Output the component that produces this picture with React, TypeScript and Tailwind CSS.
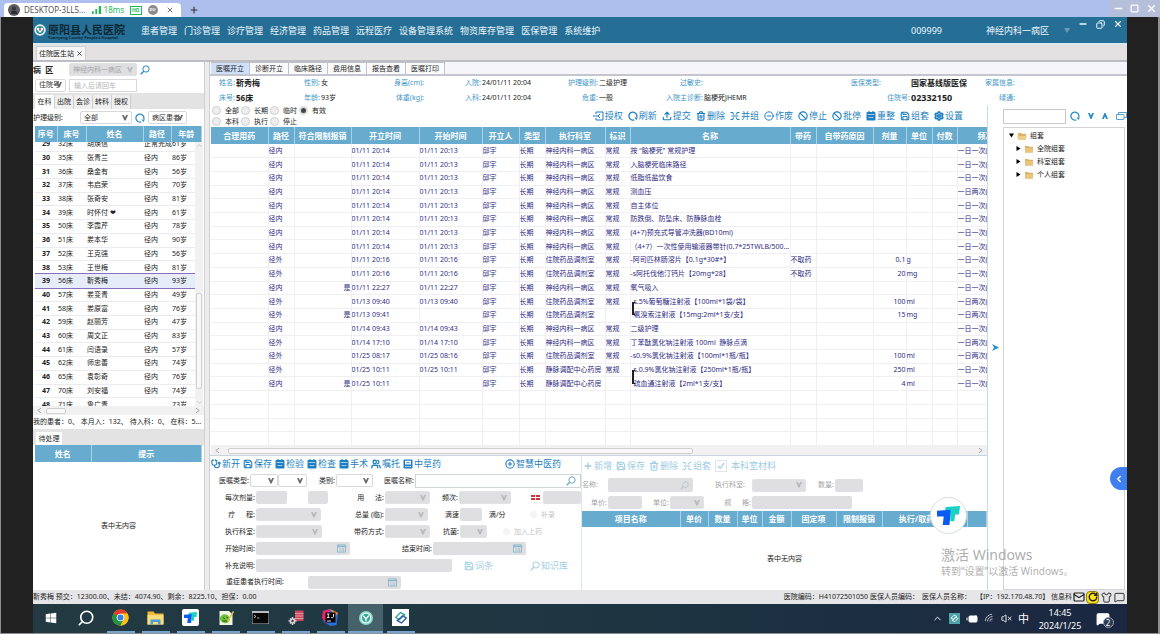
import React from "react";
import { FaWindows } from "react-icons/fa";
import {
  Ban,
  BatteryMedium,
  ChevronLeft,
  ChevronUp,
  CirclePlus,
  CircleMinus,
  Copy,
  Mail,
  MessageSquare,
  Minus,
  Plus,
  RotateCw,
  Save,
  Search,
  Settings,
  Shirt,
  Square,
  Stethoscope,
  Trash2,
  Upload,
  Users,
  VolumeX,
  Wifi,
  X,
} from "lucide-react";

/* ---------- small drawings ---------- */

function RefreshIcon({ className = "" }: { className?: string }) {
  return (
    <svg viewBox="0 0 20 20" className={className} fill="none" aria-hidden="true">
      <path d="M12.5 17.6A8 8 0 1 1 17.4 12.6" stroke="currentColor" strokeWidth="2.6" />
      <path d="M13 13.2h7l-3.4 5z" fill="currentColor" />
    </svg>
  );
}

function GrantIcon({ className = "" }: { className?: string }) {
  return (
    <svg viewBox="0 0 22 20" className={className} fill="none" stroke="currentColor" strokeWidth="2" aria-hidden="true">
      <path d="M6 6V2h14v16H6v-4" />
      <path d="M0 10h12" />
      <path d="M14 6l-4 4 4 4" />
    </svg>
  );
}

function CalendarIcon({ className = "" }: { className?: string }) {
  return (
    <svg viewBox="0 0 20 20" className={className} fill="none" stroke="currentColor" strokeWidth="2" aria-hidden="true">
      <path d="M1 2h18v16H1z" />
      <path d="M1 5.500h18" strokeWidth="3" />
      <path d="M5 11h3m2 0h5M5 15h3m2 0h2m2-4v6" strokeWidth="1.600" />
    </svg>
  );
}

function SheetIcon({ className = "" }: { className?: string }) {
  return (
    <svg viewBox="0 0 20 20" className={className} aria-hidden="true">
      <rect x="1" y="2" width="18" height="17" rx="2" fill="currentColor" />
      <path d="M6 0v4M14 0v4" stroke="currentColor" strokeWidth="2.4" />
      <path d="M3 7h14M5 13h10" stroke="#fff" strokeWidth="1.5" opacity="0.8" />
    </svg>
  );
}

function HerbIcon({ className = "" }: { className?: string }) {
  return (
    <svg viewBox="0 0 20 20" className={className} aria-hidden="true">
      <rect x="1" y="1" width="18" height="18" rx="2" fill="currentColor" />
      <rect x="4" y="3.5" width="12" height="7.5" fill="#fff" />
      <path d="M6.5 7.4h7" stroke="currentColor" strokeWidth="1.8" />
      <path d="M4 15h12" stroke="#fff" strokeWidth="1.8" strokeDasharray="3 1.5" />
    </svg>
  );
}

function MergeIcon({ className = "" }: { className?: string }) {
  return (
    <svg viewBox="0 0 20 20" className={className} fill="none" stroke="currentColor" strokeWidth="2.2" aria-hidden="true">
      <path d="M1 3h4l3 4M19 3h-4l-3 4M1 17h4l3-4M19 17h-4l-3-4M3 10h14" />
    </svg>
  );
}

function Magnifier({ className = "" }: { className?: string }) {
  return (
    <svg viewBox="0 0 20 20" className={className} fill="none" stroke="currentColor" aria-hidden="true">
      <circle cx="12" cy="8" r="6.3" strokeWidth="2" />
      <path d="M7.4 12.6 1.5 18.5" strokeWidth="2.6" />
    </svg>
  );
}

function FolderIcon({ open = false }: { open?: boolean }) {
  return (
    <svg viewBox="0 0 22 18" className="h-2 w-2.5 shrink-0" aria-hidden="true">
      <path d="M2 2h7l2 2h9v13H2z" fill="#d9b46a" />
      {open ? <path d="M0 9h22l-3 9H3z" fill="#efcf8c" /> : <path d="M2 7h18v10H2z" fill="#e8c47c" />}
    </svg>
  );
}

function ToDeskMark({ className = "" }: { className?: string }) {
  return (
    <svg viewBox="0 0 24 22" className={className} aria-hidden="true">
      <path d="M9 2 24 1l-1 9h-4l-1 7h-4V9H8z" fill="#18d3c5" />
      <path d="M0 6 14 5v6l-1 10H6l1-9H0z" fill="#0b5bf2" />
    </svg>
  );
}

/* ---------- form pieces ---------- */

function Pick({
  label,
  value = "",
  width,
  off = false,
}: {
  label: string;
  value?: string;
  width: string;
  off?: boolean;
}) {
  return (
    <span className={`grid shrink-0 items-center ${width}`}>
      <select
        aria-label={label}
        disabled={off}
        className={`col-start-1 row-start-1 h-[13px] w-full appearance-none rounded-xs border pl-[3px] ${
          off ? "border-[#e2e2e4] bg-[#dfdfe1] text-[#a5a5a5] opacity-100" : "border-[#d9d9d9] bg-white text-[#333]"
        }`}
      >
        <option>{value}</option>
      </select>
      <svg
        viewBox="0 0 10 10"
        className={`pointer-events-none col-start-1 row-start-1 mr-1 size-[6px] justify-self-end ${off ? "text-[#b9b9bb]" : "text-[#6b6b6b]"}`}
        aria-hidden="true"
      >
        <path d="M0 0h3l2 4 2-4h3L6 9H4z" fill="currentColor" />
      </svg>
    </span>
  );
}

function Box({ label, width }: { label: string; width: string }) {
  return <input aria-label={label} disabled className={`h-[13px] shrink-0 rounded-xs bg-[#dfdfe1] ${width}`} />;
}

function DateBox({ label, width }: { label: string; width: string }) {
  return (
    <span className={`flex h-[13px] shrink-0 items-center rounded-xs bg-[#dfdfe1] pr-1 ${width}`}>
      <input aria-label={label} disabled className="min-w-0 flex-1" />
      <CalendarIcon className="size-[9px] text-[#84b5c9]" />
    </span>
  );
}

function Cap({ children, width }: { children: React.ReactNode; width: string }) {
  return <span className={`shrink-0 pr-px text-right whitespace-pre ${width}`}>{children}</span>;
}

function Tool({ icon, text }: { icon: React.ReactNode; text: string }) {
  return (
    <button type="button" className="flex shrink-0 items-center gap-px text-[9px] leading-[12px]">
      {icon}
      {text}
    </button>
  );
}

function Radio({ text, on = false }: { text: string; on?: boolean }) {
  return (
    <label className="flex h-[11px] w-[29px] items-center gap-1">
      <input
        type="radio"
        name="scope"
        defaultChecked={on}
        className="size-[9px] shrink-0 appearance-none rounded-full border border-[#cfcfcf] bg-[#eee] checked:border-2 checked:border-[#ddd] checked:bg-[#444]"
      />
      <span className="whitespace-nowrap">{text}</span>
    </label>
  );
}

function HScroll({ thumb }: { thumb: string }) {
  return (
    <div className="flex h-[9px] shrink-0 items-center gap-1 bg-[#f1f1f1] px-1 text-[#999]">
      <svg viewBox="0 0 6 6" className="size-[5px]" aria-hidden="true">
        <path d="M5 0 1 3l4 3" fill="none" stroke="currentColor" />
      </svg>
      <div className="flex-1">
        <div className={`h-[6px] rounded-xs border border-[#cfcfcf] bg-[#f8f8f8] ${thumb}`} />
      </div>
      <svg viewBox="0 0 6 6" className="size-[5px]" aria-hidden="true">
        <path d="M1 0l4 3-4 3" fill="none" stroke="currentColor" />
      </svg>
    </div>
  );
}

/* ---------- data ---------- */

const menus = [
  "患者管理",
  "门诊管理",
  "诊疗管理",
  "经济管理",
  "药品管理",
  "远程医疗",
  "设备管理系统",
  "物资库存管理",
  "医保管理",
  "系统维护",
];

const patients: [string, string, string, string, string][] = [
  ["29", "32床", "胡焕信", "正常完成", "61岁"],
  ["30", "35床", "张青兰", "径内", "86岁"],
  ["31", "36床", "桑金有", "径内", "56岁"],
  ["32", "37床", "韦启荣", "径内", "70岁"],
  ["33", "38床", "张奇安", "径内", "81岁"],
  ["34", "39床", "时怀付 ❤", "径内", "61岁"],
  ["35", "50床", "李霞芹", "径内", "78岁"],
  ["36", "51床", "娄本华", "径内", "90岁"],
  ["37", "52床", "王克强", "径内", "56岁"],
  ["38", "53床", "王世梅", "径内", "81岁"],
  ["39", "56床", "靳秀梅", "径内", "93岁"],
  ["40", "57床", "娄变青", "径内", "49岁"],
  ["41", "58床", "娄原富", "径内", "76岁"],
  ["42", "59床", "赵丽芳", "径内", "47岁"],
  ["43", "60床", "周文正", "径内", "83岁"],
  ["44", "61床", "闫语录", "径内", "57岁"],
  ["45", "62床", "师忠善", "径内", "74岁"],
  ["46", "65床", "袁彰奇", "径内", "76岁"],
  ["47", "70床", "刘安福", "径内", "74岁"],
  ["48", "71床", "鲁广青", "", "73岁"],
];

type Order = {
  path: string;
  limit?: string;
  made: string;
  start?: string;
  room: string;
  mark?: string;
  name: string;
  take?: string;
  dose?: string;
  unit?: string;
  freq: string;
  group?: "top" | "bottom";
};

const ward = "神经内科一病区";
const disp = "住院药品调剂室";
const iv = "静脉调配中心药房";
const once = "一日一次(";
const twice = "一日两次(";
const d14 = { path: "径内", made: "01/11 20:14", start: "01/11 20:13", room: ward, mark: "常规" };

const orders: Order[] = [
  { ...d14, name: "按 “脑梗死” 常规护理", freq: once },
  { ...d14, name: "入脑梗死临床路径", freq: once },
  { ...d14, name: "低脂低盐饮食", freq: once },
  { ...d14, name: "测血压", freq: twice },
  { ...d14, name: "自主体位", freq: once },
  { ...d14, name: "防跌倒、防坠床、防静脉血栓", freq: once },
  { ...d14, name: "(4+7)预充式导管冲洗器(BD10ml)", freq: once },
  { ...d14, name: "（4+7）一次性使用输液器带针(0.7*25TWLB/500...", freq: once },
  { path: "径外", made: "01/11 20:16", start: "01/11 20:16", room: disp, mark: "常规", name: "-阿司匹林肠溶片【0.1g*30#*】", take: "不取药", dose: "0.1", unit: "g", freq: once },
  { path: "径外", made: "01/11 20:16", start: "01/11 20:16", room: disp, mark: "常规", name: "-s阿托伐他汀钙片【20mg*28】", take: "不取药", dose: "20", unit: "mg", freq: once },
  { path: "径内", limit: "是", made: "01/11 22:27", start: "01/11 22:27", room: ward, mark: "常规", name: "氧气吸入", freq: once },
  { path: "径外", made: "01/13 09:40", start: "01/13 09:40", room: disp, mark: "常规", name: "s.5%葡萄糖注射液【100ml*1袋/袋】", dose: "100", unit: "ml", freq: twice, group: "top" },
  { path: "径外", limit: "是", made: "01/13 09:41", room: disp, name: "氨溴索注射液【15mg:2ml*1支/支】", dose: "15", unit: "mg", freq: twice, group: "bottom" },
  { path: "径内", made: "01/14 09:43", start: "01/14 09:43", room: ward, mark: "常规", name: "二级护理", freq: once },
  { path: "径外", made: "01/14 17:10", start: "01/14 17:10", room: ward, mark: "常规", name: "丁苯酞氯化钠注射液 100ml  静脉点滴", freq: twice },
  { path: "径外", made: "01/25 08:17", start: "01/25 08:16", room: disp, mark: "常规", name: "-s0.9%氯化钠注射液【100ml*1瓶/瓶】", dose: "100", unit: "ml", freq: twice },
  { path: "径外", made: "01/25 10:11", start: "01/25 10:11", room: iv, mark: "常规", name: "s.0.9%氯化钠注射液【250ml*1瓶/瓶】", dose: "250", unit: "ml", freq: once, group: "top" },
  { path: "径内", limit: "是", made: "01/25 10:11", room: iv, name: "疏血通注射液【2ml*1支/支】", dose: "4", unit: "ml", freq: once, group: "bottom" },
];

const orderCols: [string, string][] = [
  ["合理用药", "w-[57px]"],
  ["路径", "w-[26px]"],
  ["符合限制报销", "w-[57px]"],
  ["开立时间", "w-[68px]"],
  ["开始时间", "w-[63px]"],
  ["开立人", "w-[37px]"],
  ["类型", "w-[26px]"],
  ["执行科室", "w-[60px]"],
  ["标识", "w-[25px]"],
  ["名称", "w-[160px]"],
  ["带药", "w-[26px]"],
  ["自带药原因", "w-[57px]"],
  ["剂量", "w-[33px]"],
  ["单位", "w-[26px]"],
  ["付数", "w-[25px]"],
];

const headCell = "overflow-hidden border-r border-[#a8d3e6] p-0 text-center text-[8px] font-bold whitespace-nowrap text-white";
const cellLine = "border-r border-b border-[#f0f0f3] p-0 whitespace-pre";
const bodyCell = "overflow-hidden border-r border-b border-[#f0f0f3] p-0 whitespace-pre";

/* ---------- sections ---------- */

function BrowserBar() {
  return (
    <div className="flex h-[17px] shrink-0 items-end bg-[#aebfee] text-[8px] leading-[10px]">
      <div className="ml-1 flex h-[14px] w-[177px] items-center rounded-t-sm bg-white pl-1 text-[#555]">
        <svg viewBox="0 0 24 24" className="size-3" aria-hidden="true">
          <circle cx="12" cy="12" r="12" fill="#5b5b61" />
          <path d="M5 20c1-6 3-7 7-7s6 1 7 7z" fill="#2c2c31" />
          <circle cx="12" cy="9" r="4" fill="#36363b" />
        </svg>
        <span className="ml-1">DESKTOP-3LL5...</span>
        <svg viewBox="0 0 16 14" className="ml-1.5 h-[8px] w-[9px] fill-[#1fb85c]" aria-hidden="true">
          <path d="M0 9h3v5H0zM6 5h3v9H6zM12 0h4v14h-4z" />
        </svg>
        <span className="ml-[3px] text-[#1fb85c]">18ms</span>
        <span className="ml-1.5 border border-[#1fb85c] px-px text-[5px] leading-[7px] font-bold text-[#1fb85c]">HD</span>
        <span className="ml-1.5 flex size-[10px] items-center justify-center rounded-full bg-[#8b8b90] text-[4px] font-bold text-white">
          DU
        </span>
        <button type="button" aria-label="关闭标签" className="ml-2">
          <X className="size-2" strokeWidth={2.6} />
        </button>
      </div>
      <button type="button" aria-label="新建标签" className="mb-0.5 ml-2 text-[#333]">
        <Plus className="size-[10px]" strokeWidth={2.6} />
      </button>
      <div className="ml-auto flex h-full w-[50px] items-center justify-around bg-[#b5bfd9] text-white">
        <button type="button" aria-label="最小化">
          <Minus className="size-[11px]" strokeWidth={3} />
        </button>
        <button type="button" aria-label="最大化">
          <Square className="size-[9px]" strokeWidth={3.4} />
        </button>
        <button type="button" aria-label="关闭">
          <X className="size-[11px]" strokeWidth={3} />
        </button>
      </div>
    </div>
  );
}

function Header() {
  return (
    <header className="flex h-[26px] shrink-0 items-center bg-[#256f97] text-[9px] leading-[12px] text-[#eef7fb]">
      <svg viewBox="0 0 24 24" className="ml-px size-3" aria-hidden="true">
        <circle cx="12" cy="12" r="11.5" fill="#e9f6f6" />
        <circle cx="12" cy="12" r="8" fill="#2f8f93" />
        <path d="M12 18 5.5 11c-1-3 3-5 6.500-1.500C15.500 6 19.500 8 18.500 11z" fill="#fff" />
        <path d="M10 9h4v4h-4z" fill="#c8504a" />
      </svg>
      <div className="ml-0.5 flex w-[78px] flex-col pt-1 text-[#0d2733]">
        <span className="text-[11px] leading-[12px] font-bold whitespace-nowrap">原阳县人民医院</span>
        <span className="text-[4px] leading-[4px] font-bold whitespace-nowrap">Yuanyang County People's Hospital</span>
      </div>
      <nav className="ml-[15px] flex gap-[7px] pt-px whitespace-nowrap">
        {menus.map((m) => (
          <a key={m} href="#menu">
            {m}
          </a>
        ))}
      </nav>
      <span className="mr-[44px] ml-auto pt-px">009999</span>
      <span className="pt-px">神经内科一病区</span>
      <span className="mr-2 ml-[15px] text-[6px] text-[#6f9db6]">▼</span>
      <div className="flex gap-2 self-start pt-0.5 pr-1">
        <button type="button" aria-label="窗口最小化">
          <Minus className="size-[10px]" strokeWidth={3.4} />
        </button>
        <button type="button" aria-label="窗口还原">
          <Copy className="size-[9px] -scale-x-100" strokeWidth={2.6} />
        </button>
        <button type="button" aria-label="窗口关闭">
          <X className="size-[10px]" strokeWidth={2.8} />
        </button>
      </div>
    </header>
  );
}

function PatientPanel() {
  const cols = (
    <colgroup>
      <col className="w-[22px]" />
      <col className="w-[29px]" />
      <col className="w-[57px]" />
      <col className="w-[28px]" />
      <col />
    </colgroup>
  );
  return (
    <aside className="flex w-[171px] shrink-0 flex-col bg-white">
      <div className="flex h-[15px] items-center gap-[3px]">
        <span className="w-[33px] text-[8px] font-bold whitespace-pre">病  区</span>
        <Pick label="病区" value="神经内科一病区" width="w-[68px]" off />
        <button type="button" aria-label="查找病区" className="text-[#2b8bc6]">
          <Magnifier className="size-[10px]" />
        </button>
      </div>
      <div className="flex h-4 items-center gap-[3px] pl-0.5">
        <Pick label="查询方式" value="住院号" width="w-[31px]" />
        <input
          aria-label="住院号"
          placeholder="输入后请回车"
          className="h-[13px] w-[68px] border border-[#d9d9d9] pl-1 placeholder:text-[#b5b5b5]"
        />
      </div>
      <div className="flex h-4 items-end bg-[#e3e3e3] pl-0.5">
        {["在科", "出院", "会诊", "转科", "授权"].map((t, i) => (
          <button
            type="button"
            key={t}
            className={`h-[14px] border-r border-[#cfcfcf] text-[7px] ${i === 0 ? "w-[20px] bg-white" : "w-[19px] bg-[#efefef]"}`}
          >
            {t}
          </button>
        ))}
      </div>
      <div className="flex h-[17px] items-center">
        <span className="w-[47px]">护理级别:</span>
        <Pick label="护理级别" value="全部" width="w-[52px]" />
        <button type="button" aria-label="刷新患者" className="mx-[3px] text-[#2b8bc6]">
          <RefreshIcon className="size-[10px]" />
        </button>
        <Pick label="患者范围" value="病区患者" width="w-[39px]" />
      </div>
      <table className="mx-0.5 h-4 w-[167px] shrink-0 table-fixed border-collapse bg-[#67abce]">
        {cols}
        <thead>
          <tr>
            {["序号", "床号", "姓名", "路径", "年龄"].map((h) => (
              <th key={h} className={headCell}>
                {h}
              </th>
            ))}
          </tr>
        </thead>
      </table>
      <div className="ml-0.5 flex h-[264px] shrink-0 overflow-hidden">
        <div className="flex items-center pt-0.5">
          <table className="h-[274px] w-[160px] table-fixed border-collapse">
            {cols}
            <tbody>
              {patients.map((p) => (
                <tr key={p[0]} className={p[0] === "39" ? "bg-[#e6edf8] outline outline-[#8a6fc0]" : ""}>
                  <td className="border-b border-[#ececf0] p-0 text-center font-bold">{p[0]}</td>
                  {p.slice(1).map((v, i) => (
                    <td key={i} className="border-b border-[#ececf0] p-0 pl-px whitespace-nowrap">
                      {v}
                    </td>
                  ))}
                </tr>
              ))}
            </tbody>
          </table>
        </div>
        <div className="flex w-[8px] flex-col items-center justify-between bg-[#f1f1f1] text-[#aaa]">
          <ChevronUp className="size-[7px]" />
          <div className="mt-[144px] w-[6px] flex-1 rounded-xs border border-[#cfcfcf] bg-[#f8f8f8]" />
          <ChevronUp className="mt-2.5 size-[7px] rotate-180" />
        </div>
      </div>
      <HScroll thumb="w-5" />
      <div className="h-[14px] leading-[14px] whitespace-nowrap">我的患者：0、 本月入：132、 待入科：0、 在科：5...</div>
      <div className="flex h-4 items-end bg-[#e3e3e3] pl-[3px]">
        <button type="button" className="h-[13px] w-[26px] bg-white">
          待处理
        </button>
      </div>
      <table className="mx-0.5 h-[17px] w-[167px] shrink-0 table-fixed border-collapse bg-[#67abce]">
        <thead>
          <tr>
            <th className={`w-[56px] ${headCell}`}>姓名</th>
            <th className={headCell}>提示</th>
          </tr>
        </thead>
      </table>
      <div className="flex flex-1 items-center justify-center">表中无内容</div>
    </aside>
  );
}

function PatientInfo() {
  const key = "pr-px text-right text-[#3d95c8] whitespace-nowrap";
  return (
    <dl className="grid h-[29px] shrink-0 grid-cols-[26px_60px_25px_64px_40px_32px_25px_81px_36px_55px_50px_147px_60px_70px_35px_1fr] items-center leading-[14px] whitespace-nowrap">
      <dt className={key}>姓名:</dt>
      <dd className="text-[8px] font-bold">靳秀梅</dd>
      <dt className={key}>性别:</dt>
      <dd>女</dd>
      <dt className={key}>身高(cm):</dt>
      <dd />
      <dt className={key}>入院:</dt>
      <dd>24/01/11 20:04</dd>
      <dt className={key}>护理级别:</dt>
      <dd>二级护理</dd>
      <dt className={key}>过敏史:</dt>
      <dd />
      <dt className="text-[#3d95c8]">医保类型:</dt>
      <dd className="text-[8px] font-bold">国家基线版医保</dd>
      <dt className={key}>家属信息:</dt>
      <dd />
      <dt className={key}>床号:</dt>
      <dd className="text-[8px] font-bold">56床</dd>
      <dt className={key}>年龄:</dt>
      <dd>93岁</dd>
      <dt className={key}>体重(kg):</dt>
      <dd />
      <dt className={key}>入科:</dt>
      <dd>24/01/11 20:04</dd>
      <dt className={key}>危重:</dt>
      <dd>一般</dd>
      <dt className={key}>入院主诊断:</dt>
      <dd>脑梗死JHEMR</dd>
      <dt className={key}>住院号:</dt>
      <dd className="text-[9px] font-bold">02332150</dd>
      <dt className={key}>绿通:</dt>
      <dd />
    </dl>
  );
}

function OrderTable() {
  const rows = Array.from({ length: 22 }, (_, i) => orders[i]);
  return (
    <div className="flex min-h-0 flex-1 flex-col overflow-hidden">
      <table className="w-full shrink-0 table-fixed border-collapse">
        <thead>
          <tr className="h-[17px] bg-[#67abce]">
            {orderCols.map(([h, w]) => (
              <th key={h} className={`${w} ${headCell}`}>
                {h}
              </th>
            ))}
            <th className="overflow-hidden p-0 pl-5 text-left text-[8px] font-bold whitespace-nowrap text-white">频次</th>
          </tr>
        </thead>
      </table>
      <table className="h-[302px] w-full shrink-0 table-fixed border-collapse">
        <colgroup>
          {orderCols.map(([h, w]) => (
            <col key={h} className={w} />
          ))}
          <col />
        </colgroup>
        <tbody className="text-[#2f2c84]">
          {rows.map((o, i) => (
            <tr key={i} className="h-[13px]">
              <td className={bodyCell} />
              <td className={bodyCell}>{o?.path}</td>
              <td className={`text-right ${bodyCell}`}>{o?.limit}</td>
              <td className={bodyCell}>{o?.made}</td>
              <td className={bodyCell}>{o?.start}</td>
              <td className={bodyCell}>{o ? "邱宇" : ""}</td>
              <td className={bodyCell}>{o ? "长期" : ""}</td>
              <td className={bodyCell}>{o?.room}</td>
              <td className={bodyCell}>{o?.mark}</td>
              <td className={`relative ${cellLine}`}>
                {o?.group === "top" && <span className="absolute top-1/2 -bottom-px left-px w-[3px] border-t border-l-2 border-[#222]" />}
                {o?.group === "bottom" && <span className="absolute -top-px bottom-1/2 left-px w-[3px] border-b border-l-2 border-[#222]" />}
                <span className={o?.group ? "pl-[3px]" : ""}>{o?.name}</span>
              </td>
              <td className={bodyCell}>{o?.take}</td>
              <td className={bodyCell} />
              <td className={`text-right ${bodyCell}`}>{o?.dose}</td>
              <td className={bodyCell}>{o?.unit}</td>
              <td className={bodyCell} />
              <td className="overflow-hidden border-b border-[#f0f0f3] p-0 whitespace-nowrap">{o?.freq}</td>
            </tr>
          ))}
        </tbody>
      </table>
    </div>
  );
}

function OrderForm() {
  const ic = "size-[10px]";
  return (
    <form className="flex w-[372px] shrink-0 flex-col border-r border-[#dbe6ee]">
      <div className="flex h-4 items-center gap-[3px] pl-px text-[#1d7fc0]">
        <Tool icon={<Stethoscope className={ic} strokeWidth={2.6} />} text="新开" />
        <Tool icon={<Save className={ic} strokeWidth={2.6} />} text="保存" />
        <Tool icon={<SheetIcon className={ic} />} text="检验" />
        <Tool icon={<SheetIcon className={ic} />} text="检查" />
        <Tool icon={<SheetIcon className={ic} />} text="手术" />
        <Tool icon={<Users className={ic} strokeWidth={3.2} />} text="嘱托" />
        <Tool icon={<HerbIcon className={ic} />} text="中草药" />
        <div className="mr-5 ml-auto">
          <Tool icon={<CirclePlus className={ic} strokeWidth={2.6} />} text="智慧中医药" />
        </div>
      </div>
      <div className="flex h-[17px] items-center">
        <Cap width="w-[40px]">医嘱类型:</Cap>
        <Pick label="医嘱类型" width="w-[28px]" />
        <Pick label="医嘱子类型" width="w-[29px]" />
        <Cap width="w-[29px]">类别:</Cap>
        <Pick label="类别" width="w-[37px]" />
        <Cap width="w-[42px]">医嘱名称:</Cap>
        <span className="flex h-[14px] flex-1 items-center border border-[#cfd4d8] pr-1">
          <input aria-label="医嘱名称" className="min-w-0 flex-1" />
          <Magnifier className="size-[10px] text-[#6fa5c2]" />
        </span>
      </div>
      <div className="flex h-[17px] items-center">
        <Cap width="w-[46px]">每次剂量:</Cap>
        <Box label="每次剂量" width="w-[31px]" />
        <span className="w-[21px]" />
        <Box label="剂量单位" width="w-[20px]" />
        <Cap width="w-[57px]">用      法:</Cap>
        <Pick label="用法" width="w-[45px]" off />
        <Cap width="w-[29px]">频次:</Cap>
        <Pick label="频次" width="w-[52px]" off />
        <svg viewBox="0 0 9 5" className="mr-[3px] ml-5 h-[5px] w-[9px] shrink-0" aria-hidden="true">
          <path d="M0 0h4v2H0zM0 3h4v2H0zM5 0h4v2H5zM5 3h4v2H5z" fill="#d0343f" />
        </svg>
        <Box label="频次说明" width="w-[38px]" />
      </div>
      <div className="flex h-[17px] items-center">
        <Cap width="w-[46px]">疗      程:</Cap>
        <Pick label="疗程" width="w-[65px]" off />
        <Cap width="w-[64px]">总量 (临):</Cap>
        <Pick label="总量" width="w-[43px]" off />
        <Cap width="w-[32px]">滴速</Cap>
        <Box label="滴速" width="w-[22px]" />
        <span className="ml-[7px] w-[41px]">滴/分</span>
        <label className="flex items-center gap-1 text-[#c4c4c4]">
          <input type="checkbox" disabled className="size-[7px] appearance-none rounded-full bg-[#f4f4f4]" />
          补录
        </label>
      </div>
      <div className="flex h-[17px] items-center">
        <Cap width="w-[46px]">执行科室:</Cap>
        <Pick label="执行科室" width="w-[66px]" off />
        <Cap width="w-[63px]">带药方式:</Cap>
        <Pick label="带药方式" width="w-[45px]" off />
        <Cap width="w-[30px]">抗菌:</Cap>
        <Pick label="抗菌" width="w-[27px]" off />
        <label className="ml-4 flex items-center gap-1 text-[#c4c4c4]">
          <input type="checkbox" disabled className="size-[7px] appearance-none rounded-full bg-[#f4f4f4]" />
          加入上药
        </label>
      </div>
      <div className="flex h-[17px] items-center">
        <Cap width="w-[46px]">开始时间:</Cap>
        <DateBox label="开始时间" width="w-[94px]" />
        <Cap width="w-[83px]">结束时间:</Cap>
        <DateBox label="结束时间" width="w-[93px]" />
      </div>
      <div className="flex h-[17px] items-center">
        <Cap width="w-[46px]">补充说明:</Cap>
        <Box label="补充说明" width="w-[196px]" />
        <div className="ml-3 flex gap-[37px] text-[#a5cfe2]">
          <Tool icon={<Save className={ic} strokeWidth={2.6} />} text="词条" />
          <Tool icon={<Magnifier className={ic} />} text="知识库" />
        </div>
      </div>
      <div className="flex h-4 items-center">
        <Cap width="w-[75px]">重症患者执行时间:</Cap>
        <span className="w-[23px]" />
        <DateBox label="重症患者执行时间" width="w-[93px]" />
      </div>
    </form>
  );
}

function MaterialForm() {
  const ic = "size-[10px]";
  return (
    <section className="flex min-w-0 flex-1 flex-col text-[#a3a3a3]">
      <div className="flex h-5 items-center gap-1 pl-px text-[#9fcde4]">
        <Tool icon={<Plus className={ic} strokeWidth={3.2} />} text="新增" />
        <Tool icon={<Save className={ic} strokeWidth={2.6} />} text="保存" />
        <Tool icon={<Trash2 className={ic} strokeWidth={2.6} />} text="删除" />
        <Tool icon={<MergeIcon className={ic} />} text="组套" />
        <label className="flex items-center gap-1 text-[9px]">
          <span className="flex size-[12px] items-center justify-center border border-[#dfe6ea]">
            <input type="checkbox" defaultChecked disabled className="hidden" />
            <svg viewBox="0 0 10 10" className="size-2" fill="none" stroke="currentColor" strokeWidth="1.4" aria-hidden="true">
              <path d="M1 5l3 3 5-7" />
            </svg>
          </span>
          本科室材料
        </label>
      </div>
      <div className="flex h-[18px] items-center">
        <Cap width="w-[16px]">名称:</Cap>
        <span className="ml-2.5 flex h-[14px] w-[85px] items-center rounded-xs bg-[#dfdfe1] pr-1">
          <input aria-label="材料名称" disabled className="min-w-0 flex-1" />
          <Magnifier className="size-[9px] text-[#bcc4c8]" />
        </span>
        <Cap width="w-[53px]">执行科室:</Cap>
        <span className="w-[6px]" />
        <Pick label="材料执行科室" width="w-[54px]" off />
        <Cap width="w-[29px]">数量:</Cap>
        <Box label="数量" width="w-[28px]" />
      </div>
      <div className="flex h-[17px] items-center">
        <Cap width="w-[26px]">单价:</Cap>
        <Box label="单价" width="w-[34px]" />
        <Cap width="w-[28px]">单位:</Cap>
        <Pick label="单位" width="w-[34px]" off />
        <Cap width="w-[48px]">规      格:</Cap>
        <Box label="规格" width="w-[100px]" />
      </div>
      <table className="h-4 w-full table-fixed border-collapse bg-[#67abce]">
        <thead>
          <tr>
            <th className={`w-[98px] ${headCell}`}>项目名称</th>
            <th className={`w-[28px] ${headCell}`}>单价</th>
            <th className={`w-[29px] ${headCell}`}>数量</th>
            <th className={`w-[25px] ${headCell}`}>单位</th>
            <th className={`w-[29px] ${headCell}`}>金额</th>
            <th className={`w-[45px] ${headCell}`}>固定项</th>
            <th className={`w-[46px] ${headCell}`}>限制报销</th>
            <th className={`w-[85px] ${headCell}`}>执行/取药科室</th>
            <th className={headCell} />
          </tr>
        </thead>
      </table>
      <div className="flex flex-1 items-center justify-center text-[#222]">表中无内容</div>
    </section>
  );
}

function Workspace() {
  const ic = "size-[10px]";
  return (
    <main className="flex min-w-0 flex-1 flex-col bg-white">
      <div className="flex h-[14px] shrink-0 border-b-2 border-[#c5c5cf] bg-[#f5f5fa]">
        {["医嘱开立", "诊断开立", "临床路径", "费用信息", "报告查看", "医嘱打印"].map((t, i) => (
          <button
            type="button"
            key={t}
            className={`w-[39px] border-t border-r border-[#c2c2cc] ${i === 0 ? "ml-px bg-[#cfe0f8]" : "bg-[#fbfbfb]"}`}
          >
            {t}
          </button>
        ))}
      </div>
      <PatientInfo />
      <div className="flex min-h-0 flex-1">
        <div className="flex min-w-0 flex-1 flex-col">
          <div className="flex h-[22px] shrink-0 items-center justify-between pr-6 pl-0.5">
            <div className="flex flex-col">
              <div className="flex">
                <Radio text="全部" />
                <Radio text="长期" />
                <Radio text="临时" />
                <Radio text="有效" on />
              </div>
              <div className="flex">
                <Radio text="本科" />
                <Radio text="执行" />
                <Radio text="停止" />
              </div>
            </div>
            <div className="flex gap-[5px] text-[#1d7fc0]">
              <Tool icon={<GrantIcon className="h-[10px] w-[11px]" />} text="授权" />
              <Tool icon={<RefreshIcon className={ic} />} text="刷新" />
              <Tool icon={<Upload className={ic} strokeWidth={2.8} />} text="提交" />
              <Tool icon={<Trash2 className={ic} strokeWidth={2.8} />} text="删除" />
              <Tool icon={<MergeIcon className={ic} />} text="并组" />
              <Tool icon={<CircleMinus className={ic} strokeWidth={2.4} />} text="作废" />
              <Tool icon={<Ban className={ic} strokeWidth={2.8} />} text="停止" />
              <Tool icon={<Ban className={ic} strokeWidth={2.8} />} text="批停" />
              <Tool icon={<SheetIcon className={ic} />} text="重整" />
              <Tool icon={<Save className={ic} strokeWidth={2.6} />} text="组套" />
              <Tool icon={<Settings className={ic} strokeWidth={4} />} text="设置" />
            </div>
          </div>
          <div className="flex min-h-0 flex-1 flex-col pl-px">
            <OrderTable />
            <HScroll thumb="w-[62%] ml-1" />
          </div>
          <div className="flex h-[135px] shrink-0 border-t border-[#c8d5de]">
            <OrderForm />
            <MaterialForm />
          </div>
        </div>
        <div className="flex w-4 shrink-0 items-center justify-center border-l border-[#c9dbe6]">
          <button type="button" aria-label="收起组套" className="text-[#2b8bc6]">
            <svg viewBox="0 0 10 10" className="size-[7px]" aria-hidden="true">
              <path d="M0 0l10 5-10 5 3-5z" fill="currentColor" />
            </svg>
          </button>
        </div>
        <TemplatePanel />
      </div>
    </main>
  );
}

function TemplatePanel() {
  return (
    <aside className="mr-0.5 flex w-[122px] shrink-0 flex-col">
      <div className="flex h-[22px] items-center gap-2 text-[#2b8bc6]">
        <input aria-label="查找组套" className="h-[15px] w-[63px] border border-[#c9c9c9]" />
        <button type="button" aria-label="刷新组套" className="-ml-1">
          <RefreshIcon className="size-[10px]" />
        </button>
        <button type="button" aria-label="展开">
          <svg viewBox="0 0 10 10" className="size-[6px]" aria-hidden="true">
            <path d="M0 0h3l2 4 2-4h3L6 10H4z" fill="currentColor" />
          </svg>
        </button>
        <button type="button" aria-label="收起">
          <svg viewBox="0 0 10 10" className="size-[6px] rotate-180" aria-hidden="true">
            <path d="M0 0h3l2 4 2-4h3L6 10H4z" fill="currentColor" />
          </svg>
        </button>
        <button type="button" aria-label="窗口">
          <svg viewBox="0 0 22 16" className="h-2 w-[11px]" fill="none" stroke="currentColor" strokeWidth="1.6" aria-hidden="true">
            <rect x="1" y="5" width="15" height="10" rx="1" />
            <path d="M5 5V1h16v10h-5" />
          </svg>
        </button>
      </div>
      <ul className="flex-1 border border-[#d4d4d8] pt-px leading-[13px]">
        <li className="flex items-center gap-[3px] pl-[5px]">
          <svg viewBox="0 0 10 10" className="size-[5px]" aria-hidden="true">
            <path d="M0 1h10L5 9z" />
          </svg>
          <FolderIcon open />
          组套
        </li>
        {["全院组套", "科室组套", "个人组套"].map((t) => (
          <li key={t} className="flex items-center gap-[3px] pl-3">
            <svg viewBox="0 0 10 10" className="size-[5px]" aria-hidden="true">
              <path d="M1 0v10l8-5z" />
            </svg>
            <FolderIcon />
            {t}
          </li>
        ))}
      </ul>
    </aside>
  );
}

function StatusBar() {
  return (
    <footer className="flex h-[14px] shrink-0 items-center gap-px bg-[#e6e6e8] pr-0.5 whitespace-pre">
      <span>靳秀梅 预交：12300.00、未结：4074.90、剩余：8225.10、担保：0.00</span>
      <span className="ml-auto">医院编码：H41072501050 医保人员编码：</span>
      <span className="ml-0.5">医保人员名称：</span>
      <span className="ml-1">【IP：192.170.48.70】 信息科</span>
      <Mail className="size-[12px]" strokeWidth={2.4} />
      <span className="flex size-[13px] items-center justify-center rounded-sm border border-[#8a7a10] bg-[#ffe21a]">
        <RotateCw className="size-[10px]" strokeWidth={3.4} />
      </span>
      <Shirt className="mx-px size-[11px]" strokeWidth={2} />
      <MessageSquare className="size-[11px]" strokeWidth={2} />
    </footer>
  );
}

function Task({ label, on = true, active = false, children }: { label: string; on?: boolean; active?: boolean; children: React.ReactNode }) {
  return (
    <button
      type="button"
      aria-label={label}
      className={`flex w-[35px] flex-col items-center ${active ? "bg-[#45616a]" : ""}`}
    >
      <span className="flex flex-1 items-center">{children}</span>
      <span className={`h-[2px] ${active ? "w-full" : "w-[28px]"} ${on ? "bg-[#76a5cf]" : ""}`} />
    </button>
  );
}

function TaskBar() {
  return (
    <div className="flex h-[29px] shrink-0 bg-linear-to-r from-[#233a43] via-[#1d3641] to-[#1b2741] text-white">
      <Task label="开始" on={false}>
        <FaWindows className="size-3" />
      </Task>
      <Task label="搜索" on={false}>
        <Search className="size-[18px] -scale-x-100" strokeWidth={2.2} />
      </Task>
      <Task label="Chrome">
        <svg viewBox="0 0 40 40" className="size-[17px]" aria-hidden="true">
          <circle cx="20" cy="20" r="19" fill="#fbc116" />
          <path d="M20 20 3.500 10.500A19 19 0 0 1 36.500 10.500H20z" fill="#e33b2e" />
          <path d="M3.500 10.500A19 19 0 0 0 20 39l8-14.500-8-4.500z" fill="#229342" />
          <path d="M20 11h16.800A19 19 0 0 1 20 39l8-14z" fill="#fbc116" />
          <circle cx="20" cy="20" r="9" fill="#fff" />
          <circle cx="20" cy="20" r="7" fill="#3b7de8" />
        </svg>
      </Task>
      <Task label="文件资源管理器">
        <svg viewBox="0 0 34 28" className="h-[14px] w-[17px]" aria-hidden="true">
          <path d="M1 1h12l3 4h17v22H1z" fill="#f0b93a" />
          <path d="M1 8h32v19H1z" fill="#fbdc7c" />
          <path d="M7 27V17h20v10h-5v-5H12v5z" fill="#4a9edb" />
        </svg>
      </Task>
      <Task label="ToDesk">
        <span className="flex size-[17px] items-center justify-center rounded-xs bg-white">
          <ToDeskMark className="size-[13px]" />
        </span>
      </Task>
      <Task label="Notepad++">
        <svg viewBox="0 0 32 32" className="size-4" aria-hidden="true">
          <path d="M3 2h19l7 7v21H3z" fill="#eef5e2" />
          <path d="M6 12c6-6 14-3 17 3s-4 13-11 11-11-9-6-14z" fill="#6fbf3a" />
          <path d="M10 15l4 3m3-4 4 3M9 22h11" stroke="#1e5a1a" strokeWidth="2" />
          <path d="M31 3 19 23" stroke="#e5c33e" strokeWidth="3" />
        </svg>
      </Task>
      <Task label="命令提示符">
        <svg viewBox="0 0 34 26" className="h-[13px] w-[17px]" aria-hidden="true">
          <path d="M0 0h34v26H0z" fill="#b9bcc0" />
          <path d="M1 4h32v21H1z" fill="#070707" />
          <path d="M4 8l4 3-4 3m6 0h5" stroke="#ddd" strokeWidth="1.500" fill="none" />
        </svg>
      </Task>
      <Task label="数据库服务">
        <svg viewBox="0 0 32 32" className="size-4" aria-hidden="true">
          <path d="M14 1h17v21H14z" fill="#c9485b" />
          <path d="M14 7h17M14 12h17M14 17h17" stroke="#f0b4bb" strokeWidth="1.500" />
          <path d="M9 14v16M1 22h16M4 17l10 10M14 17 4 27" stroke="#d9dadc" strokeWidth="3" />
          <circle cx="9" cy="22" r="5" fill="#d9dadc" />
          <circle cx="9" cy="22" r="2.500" fill="#5c3340" />
        </svg>
      </Task>
      <Task label="IntelliJ IDEA">
        <svg viewBox="0 0 34 34" className="size-[17px]" aria-hidden="true">
          <path d="M2 4 16 0l16 8-3 24-12 2L3 26z" fill="#2a6fe0" />
          <path d="M2 4 16 0l-4 30L0 18z" fill="#f0226b" />
          <path d="M16 0l16 8-6 8z" fill="#f58a2b" />
          <path d="M7 7h20v20H7z" fill="#000" />
          <path d="M10 10h5m-2.500 0v7M10 17h5m8-7v5c0 3-4 3-5 1M10 24h8" stroke="#fff" strokeWidth="1.800" fill="none" />
        </svg>
      </Task>
      <Task label="医院系统" active>
        <svg viewBox="0 0 30 30" className="size-[14px]" aria-hidden="true">
          <circle cx="15" cy="15" r="15" fill="#8fdccd" />
          <circle cx="15" cy="15" r="11" fill="#fff" />
          <circle cx="15" cy="15" r="9" fill="#35a896" />
          <path d="M9 10l6 7 6-7M15 17v5" stroke="#fff" strokeWidth="3" fill="none" />
        </svg>
      </Task>
      <Task label="终端工具">
        <span className="flex size-[17px] items-center justify-center bg-white">
          <svg viewBox="0 0 26 26" className="size-[14px]" fill="none" strokeWidth="2.400" aria-hidden="true">
            <path d="M3 12 12 3l8 4-10 9z" stroke="#2fa3a0" />
            <path d="M23 13l-9 9-8-4 10-9z" stroke="#2a5ea8" />
          </svg>
        </span>
      </Task>
      <div className="ml-auto flex items-center gap-[6px]">
        <ChevronUp className="size-[11px]" />
        <span className="flex size-[11px] items-center justify-center bg-[#4fa3a8]">
          <svg viewBox="0 0 26 26" className="size-[9px]" fill="none" stroke="#fff" strokeWidth="2.400" aria-hidden="true">
            <path d="M3 12 12 3l8 4-10 9zM23 13l-9 9-8-4 10-9z" />
          </svg>
        </span>
        <BatteryMedium className="size-3 -scale-x-100 fill-white" />
        <Wifi className="size-[11px] -rotate-45 text-[#b6bfca]" />
        <VolumeX className="size-[11px]" />
        <span className="text-[11px]">中</span>
        <time className="w-[50px] text-center text-[9px] leading-[13px]">
          14:45
          <br />
          2024/1/25
        </time>
        <span className="mr-3 grid w-6 items-center justify-items-center">
          <MessageSquare className="col-start-1 row-start-1 size-[14px] fill-white" />
          <span className="col-start-1 row-start-1 mt-2 ml-2.5 flex size-[11px] items-center justify-center rounded-full border border-[#9aa6b8] bg-[#2a3850] text-[8px]">
            2
          </span>
        </span>
      </div>
    </div>
  );
}

export default function App() {
  return (
    <div className="flex h-screen flex-col overflow-hidden bg-[#212121] font-['Noto_Sans','Noto_Sans_CJK_SC',sans-serif] text-[7px] leading-[10px] text-[#222]">
      <BrowserBar />
      <div className="relative flex min-h-0 flex-1 border-r-2 border-b border-l border-[#8e8e92] pr-[31px] pl-8">
        <div className="flex min-w-0 flex-1 flex-col">
          <Header />
          <div className="flex h-[19px] shrink-0 items-end border-t-2 border-b-2 border-t-[#dbe8f2] border-b-[#bdbdc4] bg-[#e3e1e2] pl-[3px]">
            <button type="button" className="flex h-[14px] w-[50px] items-center justify-center gap-0.5 border border-b-0 border-[#cfcfcf] bg-[#f6f6f6]">
              住院医生站
              <X className="size-[7px]" strokeWidth={2.6} />
            </button>
          </div>
          <div className="flex min-h-0 flex-1">
            <PatientPanel />
            <div className="w-[6px] shrink-0 border-x border-[#cfcfd4] bg-[#ececee]" />
            <Workspace />
          </div>
          <StatusBar />
          <TaskBar />
        </div>
        <button
          type="button"
          aria-label="展开工具栏"
          className="absolute right-[31px] bottom-[143px] flex h-[23px] w-[17px] items-center justify-center rounded-l-full bg-[#3f7ff0] text-white"
        >
          <ChevronLeft className="size-[10px]" strokeWidth={3.4} />
        </button>
        <div className="absolute right-[191px] bottom-[99px] flex size-[37px] items-center justify-center rounded-full border border-[#d5dce8] bg-white">
          <ToDeskMark className="size-[23px]" />
        </div>
        <div className="pointer-events-none absolute right-[78px] bottom-[55px] w-[139px] whitespace-nowrap text-[#8a8a8a]/70">
          <div className="text-[14px] leading-[18px]">激活 Windows</div>
          <div className="text-[10px] leading-[14px]">转到“设置”以激活 Windows。</div>
        </div>
      </div>
    </div>
  );
}
